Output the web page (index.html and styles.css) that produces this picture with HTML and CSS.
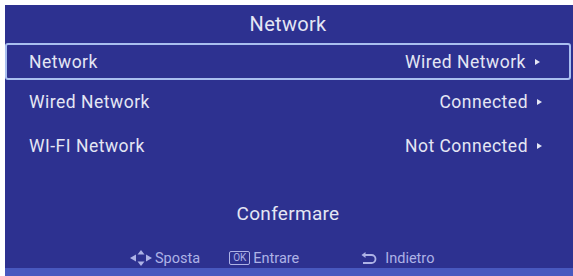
FILE: index.html
```html
<!DOCTYPE html>
<html>
<head>
<meta charset="utf-8">
<link rel="stylesheet" href="styles.css">
</head>
<body>
<div class="panel">
  <div class="title">Network</div>
  <div class="list">
    <div class="row selected"><span class="label">Network</span><span class="value">Wired Network<span class="arrow"></span></span></div>
    <div class="row"><span class="label">Wired Network</span><span class="value">Connected<span class="arrow"></span></span></div>
    <div class="row"><span class="label">WI-FI Network</span><span class="value">Not Connected<span class="arrow"></span></span></div>
  </div>
  <div class="confirm">Confermare</div>
  <div class="footer">
    <div class="hint">
      <svg class="ico-move" width="22" height="16" viewBox="0 0 22 16">
        <polygon points="0,8 6,4.5 6,11.5" fill="#aeb3e6"/>
        <polygon points="22,8 16,4.5 16,11.5" fill="#aeb3e6"/>
        <polygon points="11,0 7.5,4.5 14.5,4.5" fill="#aeb3e6"/>
        <polygon points="11,16 7.5,11.5 14.5,11.5" fill="#aeb3e6"/>
      </svg>
      <span>Sposta</span>
    </div>
    <div class="hint">
      <span class="ok">OK</span>
      <span>Entrare</span>
    </div>
    <div class="hint back">
      <svg class="ico-back" width="16" height="13" viewBox="0 0 16 13">
        <path d="M4 3 H10.5 A4 4 0 0 1 10.5 11 H2" fill="none" stroke="#aeb3e6" stroke-width="1.8"/>
        <polygon points="0.5,3 4.5,0 4.5,6" fill="#aeb3e6"/>
      </svg>
      <span>Indietro</span>
    </div>
  </div>
  <div class="band"></div>
</div>
</body>
</html>
```

FILE: styles.css
```css
html, body {
  margin: 0;
  padding: 0;
  background: #ffffff;
}

body {
  width: 573px;
  height: 276px;
  overflow: hidden;
  font-family: Roboto, "Liberation Sans", sans-serif;
}

.panel {
  margin: 5px 0 0 5px;
  height: 271px;
  background: #2d3190;
  display: flex;
  flex-direction: column;
  color: #e4e6f4;
}

.title {
  height: 38px;
  display: flex;
  align-items: center;
  justify-content: center;
  font-size: 20px;
  letter-spacing: 0.3px;
  padding-right: 2px;
}

.list {
  display: flex;
  flex-direction: column;
}

.row {
  height: 44px;
  box-sizing: border-box;
  display: flex;
  align-items: center;
  justify-content: space-between;
  padding: 0 31px 0 24px;
  font-size: 17.5px;
  letter-spacing: 0.5px;
}

.row.selected {
  height: 37px;
  border: 2px solid #a9bff0;
  border-radius: 3px;
  margin-right: 2px;
  padding: 0 29px 0 22px;
}

.value {
  display: flex;
  align-items: center;
}

.arrow {
  width: 0;
  height: 0;
  margin-left: 9px;
  border-left: 5px solid #e4e6f4;
  border-top: 3px solid transparent;
  border-bottom: 3px solid transparent;
}

.confirm {
  margin-top: 32px;
  height: 26px;
  display: flex;
  align-items: center;
  justify-content: center;
  font-size: 19px;
  letter-spacing: 0.3px;
  padding-right: 2px;
}

.footer {
  margin-top: 22px;
  height: 20px;
  display: flex;
  align-items: center;
  padding-left: 125px;
  gap: 29px;
  font-size: 14.5px;
  color: #aeb3e6;
}

.hint {
  display: flex;
  align-items: center;
  gap: 3px;
}

.hint.back {
  margin-left: 33px;
  gap: 8px;
}

.ok {
  font-size: 10px;
  border: 1px solid #aeb3e6;
  border-radius: 2px;
  padding: 0 3px;
  line-height: 12px;
}

.band {
  flex: 1;
  background: #4858bf;
}
```
